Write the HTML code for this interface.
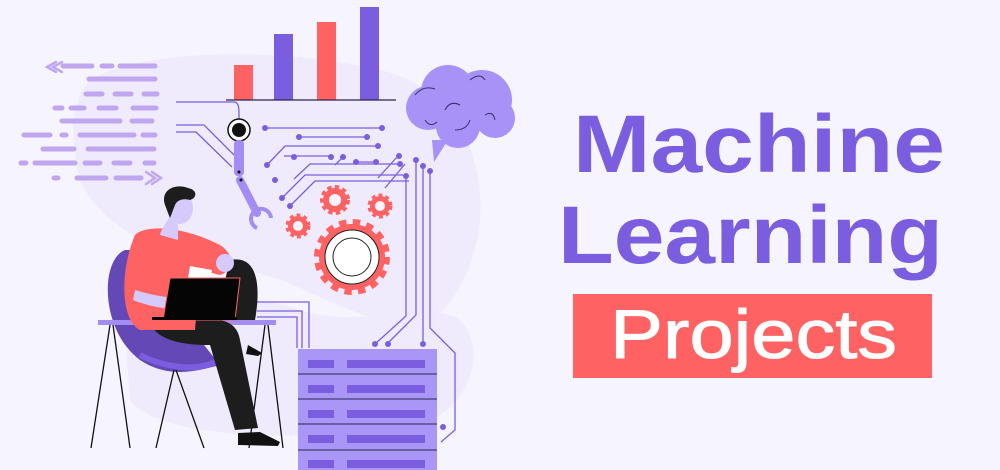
<!DOCTYPE html>
<html><head><meta charset="utf-8"><style>
html,body{margin:0;padding:0;background:#f6f4fe;width:1000px;height:470px;overflow:hidden}
svg{display:block}
</style></head><body>
<svg width="1000" height="470" viewBox="0 0 1000 470" xmlns="http://www.w3.org/2000/svg">
<rect width="1000" height="470" fill="#f6f4fe"/>
<path d="M90 80 C150 45 300 50 380 70 C450 85 485 150 480 220 C475 280 440 320 420 330 C400 330 380 320 350 310 C300 290 280 275 240 270 C180 265 100 230 80 180 C70 140 70 100 90 80Z" fill="#efebfd"/>
<path d="M125 330 C140 290 240 290 300 310 C360 330 430 300 460 320 C490 350 470 420 400 430 C300 440 160 440 130 400Z" fill="#efebfd"/>
<g stroke="#c0a6ee" stroke-width="5" stroke-linecap="round" fill="none">
<path d="M63 66h29M102 66h10M120 66h35M89 79h66M86 94h16M115 94h16M144 94h13M55 108h7M71 108h13M99 108h17M133 108h23M62 121h58M132 121h20M24 135h26M62 135h4M80 135h54M143 135h12M43 149h31M88 149h66M21 163h5M35 163h40M85 163h15M114 163h16M145 163h9M54 178h4M77 178h29M116 178h25"/>
<path d="M56 62l-9 5 9 5M62 62l-9 5 9 5M146 172l9 6-9 6M152 172l9 6-9 6" stroke-width="2.5"/>
</g>
<rect x="234" y="65" width="19" height="35" fill="#ff6262"/>
<rect x="274" y="34" width="19" height="66" fill="#7b5ddf"/>
<rect x="317" y="22" width="19" height="78" fill="#ff6262"/>
<rect x="360" y="7" width="19" height="93" fill="#7b5ddf"/>
<line x1="226" y1="100" x2="396" y2="100" stroke="#2a2550" stroke-width="1.2"/>
<g stroke="#7b5ddf" stroke-width="1.3" fill="none">
<path d="M176 102h58q5 0 5 10v18"/>
<path d="M176 125h28l30 30M176 132h20l36 35"/>
<path d="M265 128h117M299 137h68M267 165l18-19h93M294 179l16-15h93M282 198l23-23h98M290 206l25-25h94M398 156l-20 22M405 164l-20 24M284 156h47M356 162h20M343 157l-8 8"/>
<path d="M406 176v140l-31 28M416 160v155l-28 28M423 166v176M430 171v157l25 25v77l-14 12"/>
<path d="M257 302h52v46M257 311h45v37M257 317h40v31"/>
</g>
<g fill="#7b5ddf">
<circle cx="265" cy="128" r="3"/><circle cx="382" cy="128" r="3"/><circle cx="299" cy="137" r="3"/><circle cx="367" cy="137" r="3"/><circle cx="378" cy="146" r="3"/><circle cx="267" cy="165" r="3"/><circle cx="294" cy="157" r="3"/><circle cx="331" cy="157" r="3"/><circle cx="343" cy="157" r="3"/><circle cx="356" cy="162" r="3"/><circle cx="376" cy="162" r="3"/><circle cx="399" cy="156" r="3"/><circle cx="400" cy="164" r="3"/><circle cx="406" cy="176" r="3"/><circle cx="416" cy="160" r="3"/><circle cx="423" cy="166" r="3"/><circle cx="430" cy="171" r="3"/><circle cx="275" cy="180" r="3"/><circle cx="282" cy="198" r="3"/><circle cx="290" cy="206" r="3"/><circle cx="375" cy="344" r="3"/><circle cx="388" cy="344" r="3"/><circle cx="423" cy="344" r="3"/><circle cx="443" cy="427" r="3"/>
</g>
<circle cx="239" cy="130" r="11" fill="#fff" stroke="#111" stroke-width="1.5"/><circle cx="239" cy="130" r="7" fill="#111"/>
<rect x="234" y="140" width="10" height="36" rx="4" fill="#a38cf3"/>
<path d="M240 180l17 33" stroke="#a38cf3" stroke-width="8" stroke-linecap="round"/>
<path d="M257 228a10 10 0 1 1 14 -10" stroke="#a38cf3" stroke-width="4" fill="none"/>
<circle cx="239" cy="172" r="1.5" fill="#111"/><circle cx="241" cy="180" r="1.5" fill="#111"/>
<g fill="#a992f7">
<circle cx="448" cy="92" r="27"/><circle cx="482" cy="100" r="30"/><circle cx="428" cy="108" r="22"/><circle cx="458" cy="126" r="22"/><circle cx="495" cy="118" r="20"/>
<path d="M432 140l2 22 14-22z"/>
</g>
<g stroke="#3a2f6e" stroke-width="1" fill="none"><path d="M415 95q8-10 20-6M445 110q5-10 15-5M470 80q10-8 15 0M425 120q5 8 12 2M455 130q12 0 15-10M485 115q8-5 10 5"/></g>
<g fill="#ff6262">
<circle cx="352" cy="257" r="33" stroke="#ff6262" stroke-width="10" stroke-dasharray="7 6"/>
<circle cx="352" cy="257" r="31"/>
<circle cx="335" cy="200" r="12" stroke="#ff6262" stroke-width="6" stroke-dasharray="4 3"/>
<circle cx="380" cy="206" r="10" stroke="#ff6262" stroke-width="5" stroke-dasharray="3.5 3"/>
<circle cx="298" cy="226" r="10" stroke="#ff6262" stroke-width="5" stroke-dasharray="3.5 3"/>
</g>
<circle cx="352" cy="257" r="27" fill="#fff" stroke="#222" stroke-width="1"/>
<circle cx="352" cy="257" r="19" fill="#fff" stroke="#222" stroke-width="1"/>
<circle cx="335" cy="200" r="6" fill="#f6f4fe"/><circle cx="380" cy="206" r="5" fill="#f6f4fe"/><circle cx="298" cy="226" r="5" fill="#f6f4fe"/>
<rect x="298" y="349" width="139" height="121" fill="#a996f7"/>
<g stroke="#2a2550" stroke-width="1"><path d="M298 374h139M298 399h139M298 424h139M298 450h139"/></g>
<g fill="#7b5ddf">
<rect x="308" y="360" width="26" height="8"/><rect x="347" y="360" width="78" height="8"/>
<rect x="308" y="385" width="26" height="8"/><rect x="347" y="385" width="78" height="8"/>
<rect x="308" y="410" width="26" height="8"/><rect x="347" y="410" width="78" height="8"/>
<rect x="308" y="435" width="26" height="8"/><rect x="347" y="435" width="78" height="8"/>
<rect x="308" y="460" width="26" height="8"/><rect x="347" y="460" width="78" height="8"/>
</g>
<path d="M125 250 C100 260 100 330 140 360 C170 380 200 370 220 365 L200 340 C170 330 150 300 130 250Z" fill="#6448b6"/>
<path d="M140 355 C170 370 200 370 215 362" stroke="#7b5ddf" stroke-width="6" fill="none"/>
<rect x="98" y="320" width="178" height="5" fill="#a38cf3"/>
<g stroke="#111" stroke-width="1.3"><path d="M110 325l-19 123M113 325l17 123M265 325l-16 123M268 325l15 123M174 370l-18 78M176 370l28 78"/></g>
<path d="M150 325 C200 320 235 310 240 340 L258 428 L235 430 L210 345 C180 345 160 340 150 325Z" fill="#1d1d1d"/>
<path d="M230 260 C255 255 262 280 255 320 L215 320Z" fill="#1d1d1d"/>
<path d="M238 433 l22 -1 20 10 -2 4 -40 -1z" fill="#111"/>
<path d="M248 345l14 8-4 3-12-2z" fill="#111"/>
<path d="M135 235 C145 225 180 225 220 245 C235 255 235 270 220 275 L200 270 L195 330 L140 330 C120 320 120 270 135 235Z" fill="#ff6262"/>
<path d="M135 290 C150 295 170 298 190 300 L188 310 C165 310 145 305 133 300Z" fill="#d6c9fb"/>
<circle cx="225" cy="263" r="9" fill="#d6c9fb"/>
<path d="M190 266l22 4-2 10-22-2z" fill="#fff"/>
<path d="M170 216 C165 225 160 232 160 235 L178 240 L178 225Z" fill="#d6c9fb"/>
<ellipse cx="180" cy="208" rx="13" ry="16" fill="#d6c9fb"/>
<path d="M165 205 C160 190 175 183 188 188 C198 190 197 198 190 200 C183 198 177 200 175 205 L170 218Z" fill="#1d1d1d"/>
<path d="M170 278 L240 278 L235 320 L163 320Z" fill="#050505" stroke="#ff6262" stroke-width="1"/>
<rect x="152" y="317" width="85" height="3" fill="#050505"/>
<g font-family="Liberation Sans, sans-serif" font-weight="bold" fill="#7b5ddf">
<text x="573" y="172" font-size="82" textLength="372" lengthAdjust="spacingAndGlyphs">Machine</text>
<text x="558" y="263" font-size="82" textLength="385" lengthAdjust="spacingAndGlyphs">Learning</text>
</g>
<rect x="573" y="294" width="359" height="84" fill="#ff6262"/>
<text x="610" y="358" font-family="Liberation Sans, sans-serif" font-size="69" fill="#fff" stroke="#fff" stroke-width="1" textLength="287" lengthAdjust="spacingAndGlyphs">Projects</text>
</svg>
</body></html>
